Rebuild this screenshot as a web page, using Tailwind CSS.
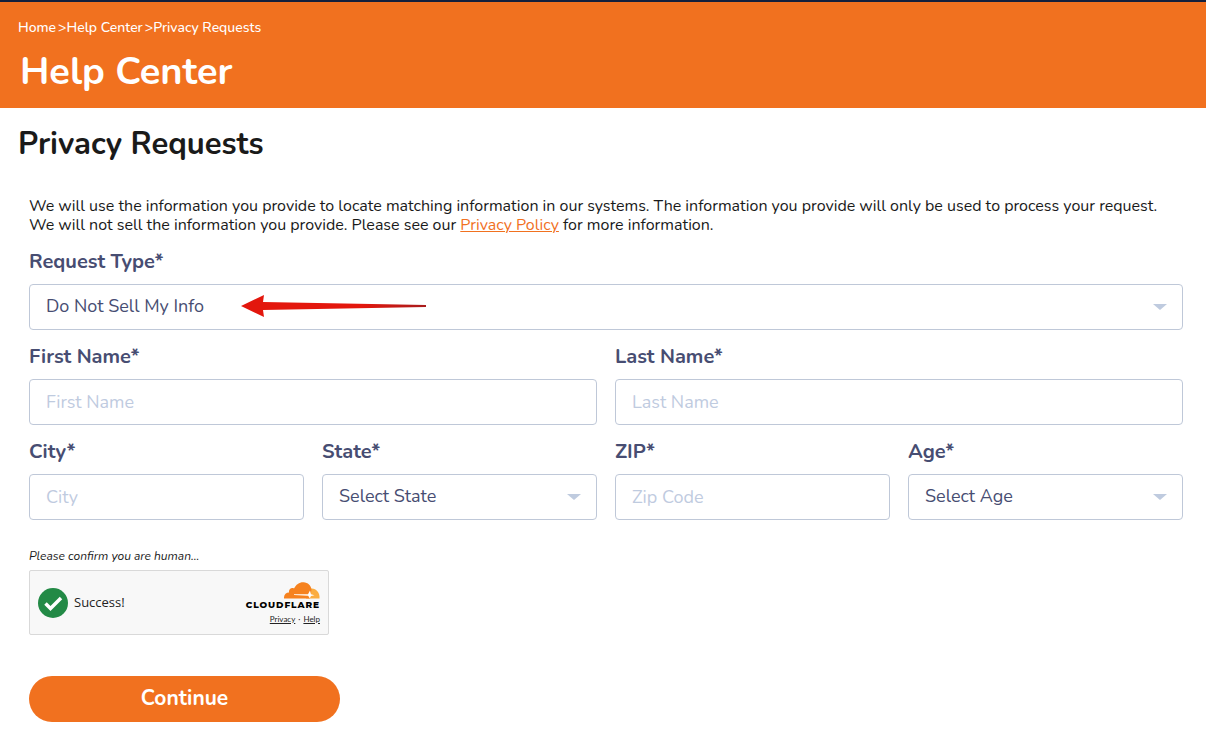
<!DOCTYPE html>
<html lang="en">
<head>
  <meta charset="UTF-8">
  <meta name="viewport" content="width=device-width, initial-scale=1.0">
  <title>Privacy Requests - Help Center</title>
  <script src="https://cdn.jsdelivr.net/npm/@tailwindcss/browser@4"></script>
</head>
<body class="bg-white font-[Nunito,Lato,sans-serif] text-[#1a1a1a] antialiased">

  <!-- Header -->
  <header class="border-t-2 border-[#14203c] bg-[#f1711f] px-[18px] pt-4 pb-3 text-white">
    <nav class="flex items-center text-[14px] leading-5 font-medium" aria-label="Breadcrumb">
      <a href="#">Home</a><span class="ml-0.5">&gt;</span><a href="#">Help Center</a><span class="ml-0.5">&gt;</span><a href="#">Privacy Requests</a>
    </nav>
    <h1 class="mt-[10px] pl-0.5 text-[38px] leading-12 font-bold">Help Center</h1>
  </header>

  <main class="pb-5">
    <h2 class="px-[18px] pt-4 text-[31px] leading-10 font-bold">Privacy Requests</h2>

    <form class="pt-[33px] pr-[23px] pl-[29px]">
      <p class="text-[16px] leading-[19px]">We will use the information you provide to locate matching information in our systems. The information you provide will only be used to process your request.<br>
        We will not sell the information you provide. Please see our <a href="#" class="text-[#f1711f] underline">Privacy Policy</a> for more information.</p>

      <div class="mt-[13px] grid grid-cols-4 gap-x-[18px] gap-y-[13px] text-[#474d72]">
        <div class="col-span-4">
          <label for="request-type" class="block text-[20px] leading-7 font-bold">Request Type*</label>
          <div class="relative mt-2">
            <select id="request-type" class="block h-[46px] w-full appearance-none rounded-sm border border-[#bfc8d8] bg-white px-4 pb-0.5 text-[18px]">
              <option>Do Not Sell My Info</option>
            </select>
            <svg class="pointer-events-none absolute top-5 right-4 h-[6px] w-[14px] fill-[#bfcbdf]" viewBox="0 0 14 6"><path d="M0 0h14L7 6z"/></svg>
            <!-- Arrow pointing at the chosen option -->
            <svg class="pointer-events-none absolute top-[11px] left-[212px] h-[22px] w-[186px]" viewBox="0 0 186 22">
              <defs>
                <linearGradient id="arrow-fill">
                  <stop offset=".65" stop-color="#e3170d"/>
                  <stop offset="1" stop-color="#a81c1c"/>
                </linearGradient>
              </defs>
              <path fill="url(#arrow-fill)" d="M0 11 23 0l-1 7 163 3v2L22 15l1 7z"/>
            </svg>
          </div>
        </div>

        <div class="col-span-2">
          <label for="first-name" class="block text-[20px] leading-7 font-bold">First Name*</label>
          <input id="first-name" type="text" placeholder="First Name" class="mt-2 block h-[46px] w-full rounded-sm border border-[#bfc8d8] px-4 text-[18px] placeholder:text-[#bfcbdf]">
        </div>
        <div class="col-span-2">
          <label for="last-name" class="block text-[20px] leading-7 font-bold">Last Name*</label>
          <input id="last-name" type="text" placeholder="Last Name" class="mt-2 block h-[46px] w-full rounded-sm border border-[#bfc8d8] px-4 text-[18px] placeholder:text-[#bfcbdf]">
        </div>

        <div>
          <label for="city" class="block text-[20px] leading-7 font-bold">City*</label>
          <input id="city" type="text" placeholder="City" class="mt-2 block h-[46px] w-full rounded-sm border border-[#bfc8d8] px-4 text-[18px] placeholder:text-[#bfcbdf]">
        </div>
        <div>
          <label for="state" class="block text-[20px] leading-7 font-bold">State*</label>
          <div class="relative mt-2">
            <select id="state" class="block h-[46px] w-full appearance-none rounded-sm border border-[#bfc8d8] bg-white px-4 pb-0.5 text-[18px]">
              <option>Select State</option>
            </select>
            <svg class="pointer-events-none absolute top-5 right-4 h-[6px] w-[14px] fill-[#bfcbdf]" viewBox="0 0 14 6"><path d="M0 0h14L7 6z"/></svg>
          </div>
        </div>
        <div>
          <label for="zip" class="block text-[20px] leading-7 font-bold">ZIP*</label>
          <input id="zip" type="text" placeholder="Zip Code" class="mt-2 block h-[46px] w-full rounded-sm border border-[#bfc8d8] px-4 text-[18px] placeholder:text-[#bfcbdf]">
        </div>
        <div>
          <label for="age" class="block text-[20px] leading-7 font-bold">Age*</label>
          <div class="relative mt-2">
            <select id="age" class="block h-[46px] w-full appearance-none rounded-sm border border-[#bfc8d8] bg-white px-4 pb-0.5 text-[18px]">
              <option>Select Age</option>
            </select>
            <svg class="pointer-events-none absolute top-5 right-4 h-[6px] w-[14px] fill-[#bfcbdf]" viewBox="0 0 14 6"><path d="M0 0h14L7 6z"/></svg>
          </div>
        </div>
      </div>

      <p class="mt-7 text-[12px] leading-4 italic">Please confirm you are human...</p>

      <!-- Human check -->
      <div class="mt-1.5 flex h-[65px] w-[300px] items-center rounded-[2px] border border-[#d9d9d9] bg-[#f8f8f8] px-2 font-['Open_Sans',sans-serif] text-[#232323]">
        <svg class="size-[30px]" viewBox="0 0 30 30">
          <circle cx="15" cy="15" r="15" fill="#238a46"/>
          <path d="M7.500 15.500 12.500 20.500 23 10" fill="none" stroke="#fff" stroke-width="3.500"/>
        </svg>
        <span class="ml-1.5 text-[13px]">Success!</span>
        <div class="ml-auto flex flex-col items-end">
          <svg class="h-[17px] w-[36px]" viewBox="0 0 36 17">
            <path fill="#fbad41" d="M27 6.500c5-.500 9 4 8.500 10H22z"/>
            <path fill="#f6821f" d="M0 16.500c-.300-3.500 1.800-6 5-6C4.500 7.500 7.500 5 10 6.500 12 2.500 15.500 0 19.500.200c4.500.200 7.500 3.300 8 7.300L26 16.500z"/>
            <path fill="#fff" d="M10 12.200 24 12.300l2-3.800 1 3.800 3.500.900-3.500.900-1.200 2.400-1.600-2.800L10 12.900z"/>
          </svg>
          <span class="mt-px font-[Montserrat,Inter,sans-serif] text-[9px] leading-[10px] font-extrabold tracking-widest text-black">CLOUDFLARE</span>
          <div class="mt-1 flex gap-[3px] font-[Lato,sans-serif] text-[8px] leading-[10px]">
            <a href="#" class="underline">Privacy</a><span>&middot;</span><a href="#" class="underline">Help</a>
          </div>
        </div>
      </div>

      <button type="button" class="mt-[41px] h-[46px] w-[311px] rounded-full bg-[#f1711f] text-[21px] font-bold text-white">Continue</button>
    </form>
  </main>

</body>
</html>
